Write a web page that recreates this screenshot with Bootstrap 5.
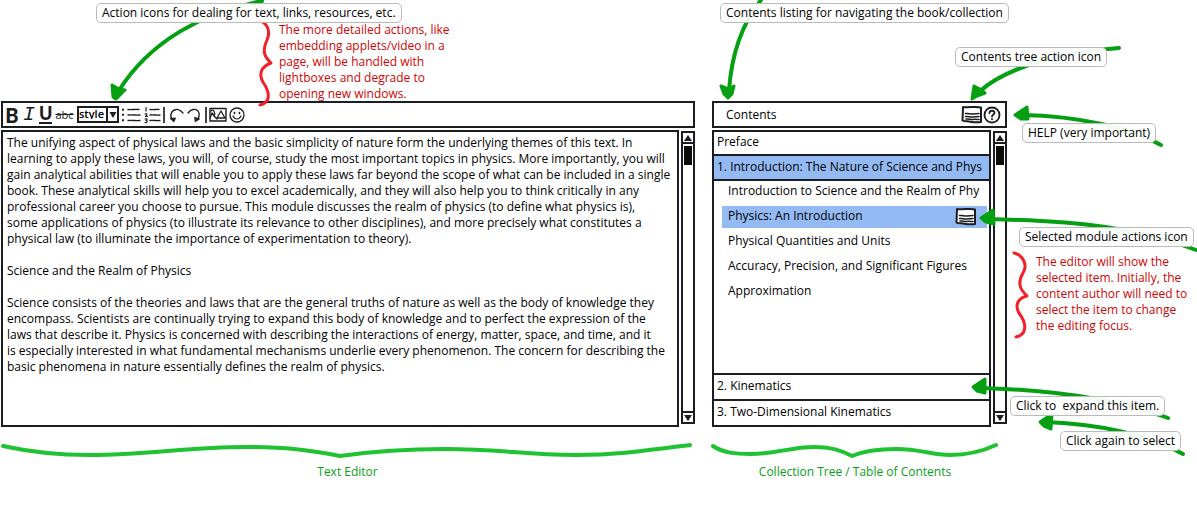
<!DOCTYPE html>
<html lang="en">
<head>
<meta charset="utf-8">
<meta name="viewport" content="width=device-width, initial-scale=1">
<title>Book editor wireframe</title>
<link href="https://cdn.jsdelivr.net/npm/bootstrap@5.3.0/dist/css/bootstrap.min.css" rel="stylesheet">
<style>
  :root { --ink: #1c1d22; --pick: #94baf3; --arrow: #04a012; --warn: #cf0505; }
  body { font: 12px/16px "Open Sans", "Liberation Sans", sans-serif; color: #000; background: #fff; overflow-x: hidden; }
  button, select, textarea { font: inherit; color: inherit; }
  .board { column-gap: 16px; }
  .pane { padding-top: 101px; }
  .contents-pane { width: 296px; }
  .notes-pane { width: 190px; margin-left: -16px; }

  /* ink frames */
  .frame { border: 2px solid var(--ink); background: #fff; }
  .bar { height: 27px; margin-left: 1px; }
  .workspace { height: 297px; margin: 2px 0 0 1px; column-gap: 2px; }

  /* toolbar */
  .tools { gap: 2px; padding-left: 2px; }
  .tool { border: 0; padding: 0; background: none; line-height: 20px; height: 20px; color: var(--ink); text-align: center; flex: none; }
  .tool svg, .drawing { display: block; fill: none; stroke: var(--ink); stroke-linecap: round; stroke-linejoin: round; }
  .tool-b { width: 14px; font-family: Lato, sans-serif; font-weight: 900; font-size: 20px; }
  .tool-i { width: 16px; font: italic 20px/20px "Liberation Mono", monospace; }
  .tool-u { width: 13px; font-family: Lato, sans-serif; font-weight: 900; font-size: 18px; border-bottom: 2px solid var(--ink); line-height: 15px; height: 18px; }
  .tool-s { width: 21px; font-size: 11px; text-decoration: line-through; }
  .style-pick { width: 42px; height: 17px; }
  .style-pick select { appearance: none; width: 100%; height: 100%; border: 2px solid var(--ink); border-radius: 0; background: #fff; padding: 0 0 2px; font: 600 11px/11px "Open Sans", sans-serif; }
  .style-pick svg { position: absolute; right: 0; top: 0; pointer-events: none; }
  .rule { width: 2px; height: 16px; background: #444; }
  .rule-wide { margin-right: 2px; }

  .editor-text { resize: none; overflow: hidden; white-space: pre; padding: 3px 0 0 4px; border-radius: 0; outline: 0; min-width: 0; }

  /* scrollbars */
  .scroller { width: 14px; margin: 1px 0 3px; flex: none; }
  .scroller button { border: 0; padding: 0; background: none; height: 9px; line-height: 0; }
  .scroller .to-top { border-bottom: 2px solid var(--ink); height: 11px; }
  .scroller .to-end { border-top: 2px solid var(--ink); height: 11px; }
  .thumb { width: 8px; height: 19px; margin-top: 2px; background: #0c0c0c; }

  /* contents tree */
  .tree { min-width: 0; }
  .chapter { height: 26px; padding: 0 3px 2px; border: 0; background: none; text-align: left; overflow: hidden; white-space: nowrap; flex: none; }
  .chapter:first-child { height: 22px; }
  .chapter + .chapter, .modules + .chapter { border-top: 2px solid var(--ink); }
  .chapter.open { height: 27px; background: var(--pick); border-bottom: 2px solid var(--ink); }
  .modules { padding: 0 2px 0 8px; }
  .module { height: 25px; }
  .module a { color: #000; text-decoration: none; display: flex; align-items: center; justify-content: space-between; height: 22px; padding: 0 10px 2px 6px; white-space: nowrap; }
  .module.picked a { background: var(--pick); }

  /* annotations pinned over the mock-up */
  .callout { position: absolute; height: 20px; line-height: 17px; padding: 0 5px; border: 1px solid #bbb; border-radius: 5px; background: rgba(255,255,255,.94); white-space: nowrap; }
  .remark { position: absolute; color: var(--warn); white-space: nowrap; }
  .arrows { position: absolute; left: 0; top: 0; width: 1px; height: 1px; overflow: visible; pointer-events: none; fill: none; stroke: var(--arrow); stroke-width: 4; stroke-linecap: round; stroke-linejoin: round; }
  .arrows .tip { fill: var(--arrow); stroke-width: 3; }
  .arrows .brace { stroke: #f2202a; stroke-width: 3; }
  .span-brace { display: block; width: 100%; height: 18px; fill: none; stroke: #1fc332; stroke-width: 4; stroke-linecap: round; margin-top: 14px; }
  .pane-name { color: #08a018; text-align: center; margin: 5px 0 0; }
</style>
</head>
<body>
<svg class="d-none">
  <symbol id="note-icon" viewBox="0 0 22 19">
    <path d="M2 2C8 3 15 1 20 2.500L20 17C15 18 11 17 8 16.500C6 16 4 17 1.500 15.500Z" fill="#fff" stroke-width="2"/>
    <path d="M4.500 8.500C8 8 9 9.500 12 9S16 8.500 18 8.500M4.500 11.500C8 11 9 12.500 12 12S16 11.500 18 11.500M5 14C8 13.500 10 15 12 14.500S16 14.500 18 14.500" stroke-width="1.500"/>
  </symbol>
</svg>

<main class="board d-flex">
  <section class="pane position-relative flex-grow-1" aria-label="Text editor">
    <div class="frame bar tools d-flex align-items-center" role="toolbar" aria-label="Formatting">
      <button class="tool tool-b" type="button" title="Bold">B</button>
      <button class="tool tool-i" type="button" title="Italic">I</button>
      <button class="tool tool-u" type="button" title="Underline">U</button>
      <button class="tool tool-s" type="button" title="Strikethrough">abc</button>
      <div class="style-pick position-relative">
        <select aria-label="Text style"><option>style</option></select>
        <svg width="13" height="17"><path d="M1 1V16" stroke="#1c1d22" stroke-width="2"/><path d="M3.500 6H10.500L7 12Z" fill="#1c1d22"/></svg>
      </div>
      <button class="tool" type="button" title="Bulleted list"><svg width="21" height="18"><path d="M2 3.500v.5M2 8.500v.5M2 14v.5" stroke-width="2"/><path d="M7 3.500C11 4 14 3 18 3.500M7 9C12 8.500 15 9.500 19 9M7 14.500C11 14 14 15 19 14.500" stroke-width="1.300"/></svg></button>
      <button class="tool" type="button" title="Numbered list"><svg width="17" height="18"><path d="M2 1.500V5M1 8C4 7 3 9 1.500 10.500H3.500M1 13C4 12.500 3 14 2 14.500C4 14.500 3 17 1 16.500" stroke-width="1.200"/><path d="M6 3.500C10 4 12 3 15 3.500M6 9C10 8.500 12 9.500 16 9M6 14.500C10 14 12 15 16 14.500" stroke-width="1.300"/></svg></button>
      <div class="rule rule-wide"></div>
      <button class="tool" type="button" title="Undo"><svg width="16" height="18"><path d="M3 13C0 9 3 4 7 3.500C10 3 12 5 14 7" stroke-width="1.300"/><path d="M1.500 12.500L6.500 12L5 15.500Z" fill="#1c1d22" stroke-width="1"/></svg></button>
      <button class="tool" type="button" title="Redo"><svg width="16" height="18"><path d="M1 7C4 3 8 2.500 10.500 4.500C13 7 13 9 11 13" stroke-width="1.300"/><path d="M8 11.500L12.500 13L8.500 15.500Z" fill="#1c1d22" stroke-width="1"/></svg></button>
      <div class="rule"></div>
      <button class="tool" type="button" title="Insert image"><svg width="18" height="18"><path d="M1 2.500H17V15H1Z" stroke-width="1.400"/><path d="M1 12L3 7L6 11M2 5C4 2 7 7 5 10L8 13M8 12L12 5L16 12H8" stroke-width="1.300"/></svg></button>
      <button class="tool" type="button" title="Insert smiley"><svg width="16" height="18"><circle cx="8" cy="9" r="7" stroke-width="1.300"/><path d="M5.500 6.500V7.500M10.500 6.500V7.500" stroke-width="1.600"/><path d="M4 10C6 14 10 14 12 10" stroke-width="1.200"/></svg></button>
    </div>
    <div class="workspace d-flex">
      <textarea class="frame editor-text flex-grow-1" aria-label="Module text" spellcheck="false">The unifying aspect of physical laws and the basic simplicity of nature form the underlying themes of this text. In
learning to apply these laws, you will, of course, study the most important topics in physics. More importantly, you will
gain analytical abilities that will enable you to apply these laws far beyond the scope of what can be included in a single
book. These analytical skills will help you to excel academically, and they will also help you to think critically in any
professional career you choose to pursue. This module discusses the realm of physics (to define what physics is),
some applications of physics (to illustrate its relevance to other disciplines), and more precisely what constitutes a
physical law (to illuminate the importance of experimentation to theory).

Science and the Realm of Physics

Science consists of the theories and laws that are the general truths of nature as well as the body of knowledge they
encompass. Scientists are continually trying to expand this body of knowledge and to perfect the expression of the
laws that describe it. Physics is concerned with describing the interactions of energy, matter, space, and time, and it
is especially interested in what fundamental mechanisms underlie every phenomenon. The concern for describing the
basic phenomena in nature essentially defines the realm of physics.</textarea>
      <div class="frame scroller d-flex flex-column align-items-stretch">
        <button class="to-top" type="button" aria-label="Scroll up"><svg width="10" height="8"><path d="M5 1L9 7H1Z" fill="#1c1d22"/></svg></button>
        <div class="thumb mx-auto"></div>
        <button class="to-end mt-auto" type="button" aria-label="Scroll down"><svg width="10" height="8"><path d="M5 7L9 1H1Z" fill="#1c1d22"/></svg></button>
      </div>
    </div>
    <svg class="span-brace" viewBox="0 0 695 18" preserveAspectRatio="none"><path d="M3 5C30 11 60 14 90 14C145 14 190 6 245 6C285 6 310 9 340 15C375 10 410 8 445 8C500 8 525 14 575 14C620 14 650 9 690 4"/></svg>
    <p class="pane-name">Text Editor</p>

    <svg class="arrows"><path d="M262 1C205 12 150 40 118 92"/><path class="tip" d="M112 85L119 89L125 90L121 94L116 99L113 97Z"/><path class="brace" d="M259 21C267 22 271 31 267 40C261 53 266 58 271 63C260 67 259 75 263 82C271 94 270 103 260 105"/></svg>
    <div class="callout" style="left:96px;top:3px">Action icons for dealing for text, links, resources, etc.</div>
    <div class="remark" style="left:279px;top:22px">The more detailed actions, like<br>embedding applets/video in a<br>page, will be handled with<br>lightboxes and degrade to<br>opening new windows.</div>
  </section>

  <section class="pane contents-pane position-relative flex-shrink-0" aria-label="Contents">
    <div class="frame bar d-flex align-items-center">
      <span class="ms-2 ps-1 me-auto">Contents</span>
      <button class="tool" type="button" title="Tree actions"><svg width="22" height="19"><use href="#note-icon"/></svg></button>
      <button class="tool me-1" type="button" title="Help"><svg width="18" height="18" viewBox="0 0 18 18"><circle cx="9" cy="9" r="7.500" stroke-width="1.800"/><path d="M6.500 7C6.500 4 11.500 4 11.500 7C11.500 8.500 9 8.500 9 10.500M9 13V13.300" stroke-width="1.800"/></svg></button>
    </div>
    <div class="workspace d-flex">
      <div class="frame tree d-flex flex-column flex-grow-1">
        <button class="chapter" type="button">Preface</button>
        <button class="chapter open" type="button" aria-expanded="true">1. Introduction: The Nature of Science and Phys</button>
        <ul class="modules list-unstyled mb-0 flex-grow-1">
          <li class="module"><a href="#m1">Introduction to Science and the Realm of Phy</a></li>
          <li class="module picked"><a href="#m2">Physics: An Introduction <svg class="drawing" width="22" height="19"><use href="#note-icon"/></svg></a></li>
          <li class="module"><a href="#m3">Physical Quantities and Units</a></li>
          <li class="module"><a href="#m4">Accuracy, Precision, and Significant Figures</a></li>
          <li class="module"><a href="#m5">Approximation</a></li>
        </ul>
        <button class="chapter" type="button">2. Kinematics</button>
        <button class="chapter" type="button">3. Two-Dimensional Kinematics</button>
      </div>
      <div class="frame scroller d-flex flex-column align-items-stretch">
        <button class="to-top" type="button" aria-label="Scroll up"><svg width="10" height="8"><path d="M5 1L9 7H1Z" fill="#1c1d22"/></svg></button>
        <div class="thumb mx-auto"></div>
        <button class="to-end mt-auto" type="button" aria-label="Scroll down"><svg width="10" height="8"><path d="M5 7L9 1H1Z" fill="#1c1d22"/></svg></button>
      </div>
    </div>
    <div class="pe-2">
      <svg class="span-brace" viewBox="0 0 288 18" preserveAspectRatio="none"><path d="M2 5C12 12 25 13 40 13C65 13 80 6 103 6C120 6 130 9 141 15C155 9 170 8 185 8C210 8 220 14 239 14C258 14 272 10 285 4"/></svg>
      <p class="pane-name">Collection Tree / Table of Contents</p>
    </div>

    <svg class="arrows"><g transform="translate(-711 0)"><path d="M761 0C745 20 732 50 729 90"/><path class="tip" d="M721 86L728 89L734 86L732 94L728 98L724 94Z"/><path d="M1119 48C1060 52 1005 68 979 92"/><path class="tip" d="M974 86L980 89L985 93L977 96L972 99Z"/></g></svg>
    <div class="callout" style="left:9px;top:3px">Contents listing for navigating the book/collection</div>
    <div class="callout" style="left:244px;top:47px">Contents tree action icon</div>
  </section>

  <aside class="notes-pane position-relative flex-shrink-0" aria-label="Notes">
    <svg class="arrows"><g transform="translate(-1007 0)">
      <path d="M1161 145C1130 128 1080 116 1022 115"/><path class="tip" d="M1015 115L1027 107L1028 119L1021 119Z"/>
      <path d="M1196 250C1140 228 1080 221 988 219"/><path class="tip" d="M981 218L993 210L994 224L986 222Z"/>
      <path d="M1168 418C1120 400 1060 390 980 388"/><path class="tip" d="M973 387L985 379L985 393L977 391Z"/>
      <path d="M1183 454C1150 435 1100 424 1046 422"/><path class="tip" d="M1040 422L1052 414L1051 429L1044 426Z"/>
      <path class="brace" d="M1014 253C1023 255 1028 265 1023 273C1016 285 1022 291 1027 296C1015 299 1016 308 1019 313C1028 325 1026 335 1016 337"/>
    </g></svg>
    <div class="callout" style="left:15px;top:123px">HELP (very important)</div>
    <div class="callout" style="left:12px;top:227px">Selected module actions icon</div>
    <div class="remark" style="left:29px;top:254px">The editor will show the<br>selected item. Initially, the<br>content author will need to<br>select the item to change<br>the editing focus.</div>
    <div class="callout" style="left:3px;top:396px">Click to &nbsp;expand this item.</div>
    <div class="callout" style="left:53px;top:431px">Click again to select</div>
  </aside>
</main>
<script src="https://cdn.jsdelivr.net/npm/bootstrap@5.3.0/dist/js/bootstrap.bundle.min.js"></script>
</body>
</html>
